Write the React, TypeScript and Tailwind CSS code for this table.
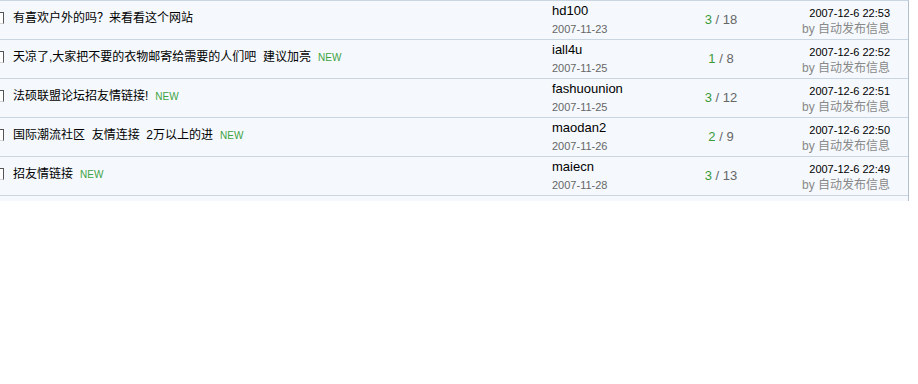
import React from 'react';

type Topic = {
  title: string;
  isNew: boolean;
  author: string;
  posted: string;
  replies: number;
  views: number;
  lastTime: string;
  lastBy: string;
};

const topics: Topic[] = [
  { title: '有喜欢户外的吗？来看看这个网站', isNew: false, author: 'hd100', posted: '2007-11-23', replies: 3, views: 18, lastTime: '2007-12-6 22:53', lastBy: '自动发布信息' },
  { title: '天凉了,大家把不要的衣物邮寄给需要的人们吧  建议加亮', isNew: true, author: 'iall4u', posted: '2007-11-25', replies: 1, views: 8, lastTime: '2007-12-6 22:52', lastBy: '自动发布信息' },
  { title: '法硕联盟论坛招友情链接!', isNew: true, author: 'fashuounion', posted: '2007-11-25', replies: 3, views: 12, lastTime: '2007-12-6 22:51', lastBy: '自动发布信息' },
  { title: '国际潮流社区  友情连接  2万以上的进', isNew: true, author: 'maodan2', posted: '2007-11-26', replies: 2, views: 9, lastTime: '2007-12-6 22:50', lastBy: '自动发布信息' },
  { title: '招友情链接', isNew: true, author: 'maiecn', posted: '2007-11-28', replies: 3, views: 13, lastTime: '2007-12-6 22:49', lastBy: '自动发布信息' },
  { title: '诚招友情链接', isNew: true, author: 'efcdn', posted: '2007-11-29', replies: 2, views: 10, lastTime: '2007-12-6 22:48', lastBy: '自动发布信息' },
];

function TopicRow({ t }: { t: Topic }) {
  return (
    <div className="flex h-[39px] shrink-0 border-b border-[#c9d5e1] bg-[#f5f9fd]">
      {/* 标题 */}
      <div className="flex w-[552px] items-center pb-[4px]">
        <span className="-ml-[9px] mr-[9px] h-[12px] w-[13px] shrink-0 border border-[#d4d4d4] border-t-[#555] border-r-[#555] bg-white" />
        <span className="whitespace-pre text-[12px] text-black">{t.title}</span>
        {t.isNew && <span className="ml-[7px] text-[10px] text-[#3fa33f]">NEW</span>}
      </div>

      {/* 作者 */}
      <div className="flex w-[130px] flex-col">
        <span className="pt-[1px] text-[13px] leading-[18px] text-black">{t.author}</span>
        <span className="text-[11px] leading-[18px] text-[#666]">{t.posted}</span>
      </div>

      {/* 回复 / 查看 */}
      <div className="flex w-[78px] items-center justify-center text-[13px]">
        <span className="text-[#3a9a3a]">{t.replies}</span>
        <span className="whitespace-pre text-[#666]"> / {t.views}</span>
      </div>

      {/* 最后发表 */}
      <div className="flex flex-1 flex-col items-end pr-[18px]">
        <span className="pt-[4px] text-[11px] leading-[16px] text-black">{t.lastTime}</span>
        <span className="text-[12px] leading-[16px] text-[#888]">by {t.lastBy}</span>
      </div>
    </div>
  );
}

export default function App() {
  return (
    <div className="h-[384px] w-[918px] bg-white font-['Liberation_Sans','Noto_Sans_CJK_SC',sans-serif]">
      <div className="flex h-[201px] w-[909px] flex-col overflow-hidden border-t border-r border-t-[#c9d5e1] border-r-[#b4c0cd] bg-[#f5f9fd]">
        {topics.map((t) => (
          <TopicRow key={t.author} t={t} />
        ))}
      </div>
    </div>
  );
}
